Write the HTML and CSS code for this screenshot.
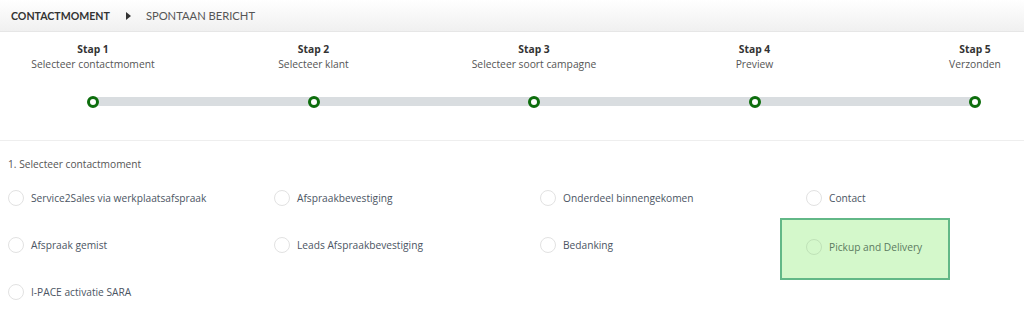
FILE: index.html
```html
<!DOCTYPE html>
<html lang="en">
<head>
    <meta charset="UTF-8">
    <title>Contactmoment - Spontaan bericht</title>
    <link rel="stylesheet" href="styles.css">
</head>
<body>
    <div class="crumbs">
        <span class="crumb-main">CONTACTMOMENT</span>
        <span class="crumb-arrow"></span>
        <span class="crumb-sub">SPONTAAN BERICHT</span>
    </div>

    <div class="steps">
        <div class="step-labels">
            <div class="step"><b>Stap 1</b><span>Selecteer contactmoment</span></div>
            <div class="step"><b>Stap 2</b><span>Selecteer klant</span></div>
            <div class="step"><b>Stap 3</b><span>Selecteer soort campagne</span></div>
            <div class="step"><b>Stap 4</b><span>Preview</span></div>
            <div class="step"><b>Stap 5</b><span>Verzonden</span></div>
        </div>
        <div class="track">
            <span class="dot"></span>
            <span class="dot"></span>
            <span class="dot"></span>
            <span class="dot"></span>
            <span class="dot"></span>
        </div>
    </div>

    <div class="choose">
        <div class="choose-title">1. Selecteer contactmoment</div>
        <div class="options">
            <label class="option"><span class="radio"></span>Service2Sales via werkplaatsafspraak</label>
            <label class="option"><span class="radio"></span>Afspraakbevestiging</label>
            <label class="option"><span class="radio"></span>Onderdeel binnengekomen</label>
            <label class="option"><span class="radio"></span>Contact</label>
            <label class="option"><span class="radio"></span>Afspraak gemist</label>
            <label class="option"><span class="radio"></span>Leads Afspraakbevestiging</label>
            <label class="option"><span class="radio"></span>Bedanking</label>
            <label class="option active"><span class="radio"></span>Pickup and Delivery</label>
            <label class="option"><span class="radio"></span>I-PACE activatie SARA</label>
        </div>
    </div>
</body>
</html>
```

FILE: styles.css
```css
body {
    margin: 0;
    font-family: "Open Sans", Arial, sans-serif;
    color: #444;
    background: #fff;
}
.crumbs {
    height: 31px;
    border-bottom: 1px solid #e6e6e6;
    background: linear-gradient(#ffffff, #f0f0f0);
    display: flex;
    align-items: center;
    padding-left: 11px;
    font-family: Lato, Arial, sans-serif;
}
.crumb-main {
    font-size: 10.6px;
    font-weight: bold;
    color: #333;
}
.crumb-arrow {
    width: 0;
    height: 0;
    border-top: 4px solid transparent;
    border-bottom: 4px solid transparent;
    border-left: 5px solid #333;
    margin: 0 15px 0 16px;
}
.crumb-sub {
    font-size: 11.2px;
    color: #555;
}
.steps {
    padding: 10px 0 34px;
    border-bottom: 1px solid #eee;
}
.step-labels {
    display: flex;
    justify-content: space-between;
    margin: 0 49px 0 93px;
}
.step {
    width: 0;
    display: flex;
    flex-direction: column;
    align-items: center;
    white-space: nowrap;
    font-size: 10.3px;
    line-height: 15px;
    color: #555;
}
.step b {
    color: #333;
}
.track {
    display: flex;
    justify-content: space-between;
    align-items: center;
    margin: 25px 43px 0 87px;
    height: 9px;
    background: linear-gradient(#d9dde0, #d9dde0) no-repeat 6px 0 / calc(100% - 12px) 9px;
}
.dot {
    width: 6px;
    height: 6px;
    border: 3px solid #0d6e0d;
    border-radius: 50%;
    background: #fff;
}
.choose {
    padding: 16px 8px;
}
.choose-title {
    font-size: 10.2px;
    line-height: 14px;
    color: #555;
    margin-bottom: 19px;
}
.options {
    display: grid;
    grid-template-columns: repeat(4, 266px);
    grid-auto-rows: 47px;
}
.option {
    display: flex;
    align-items: flex-start;
    font-size: 10.2px;
    line-height: 16px;
    color: #4b5563;
    gap: 7px;
}
.radio {
    width: 14px;
    height: 14px;
    border: 1px solid #e2e2e2;
    border-radius: 50%;
    background: #fff;
}
.option.active {
    margin: -19px 122px 4px -26px;
    padding: 19px 0 0 24px;
    border: 2px solid #62b887;
    background: #d4f8cb;
    color: #5b7a60;
}
.option.active .radio {
    background: transparent;
    border-color: #c0e2b8;
}
```
